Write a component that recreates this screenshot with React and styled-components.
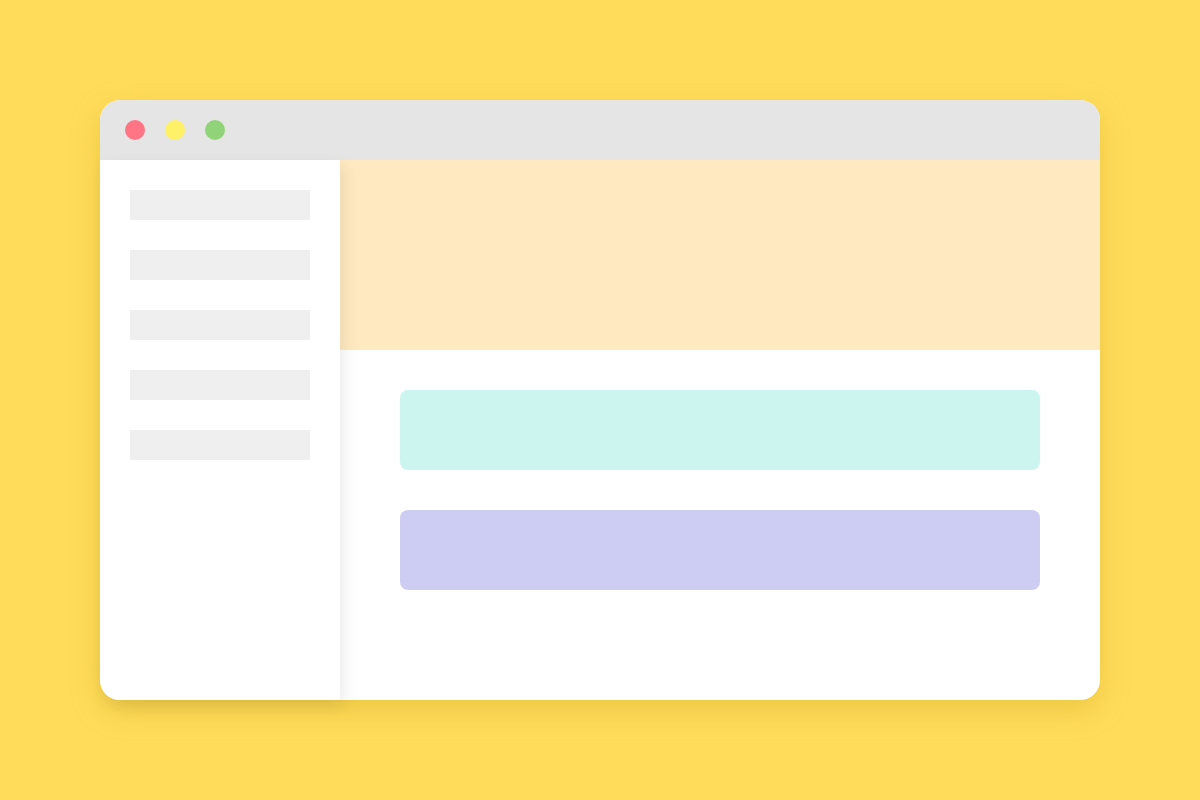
import React from "react";
import styled, { createGlobalStyle } from "styled-components";

const Global = createGlobalStyle`
  html, body {
    margin: 0;
    padding: 0;
    background: #ffdd5a;
    font-family: "Liberation Sans", Arial, sans-serif;
  }
`;

const Page = styled.div`
  width: 1200px;
  height: 800px;
  padding: 100px;
  box-sizing: border-box;
`;

const Window = styled.div`
  width: 1000px;
  height: 600px;
  background: #fff;
  border-radius: 20px;
  box-shadow: 0 10px 30px rgba(180, 130, 0, 0.25);
  display: flex;
  flex-direction: column;
`;

const TitleBar = styled.div`
  height: 60px;
  flex-shrink: 0;
  background: #e5e5e5;
  border-radius: 20px 20px 0 0;
  display: flex;
  align-items: center;
  gap: 20px;
  padding-left: 25px;
`;

const Dot = styled.span`
  width: 20px;
  height: 20px;
  border-radius: 50%;
  background: ${(p) => p.color};
`;

const Body = styled.div`
  flex: 1;
  display: flex;
`;

const Sidebar = styled.aside`
  width: 240px;
  flex-shrink: 0;
  background: #fff;
  border-radius: 0 0 0 20px;
  box-shadow: 4px 6px 16px rgba(0, 0, 0, 0.08);
  position: relative;
  z-index: 1;
  padding: 30px;
  box-sizing: border-box;
  display: flex;
  flex-direction: column;
  gap: 30px;
`;

const NavBar = styled.div`
  height: 30px;
  background: #efefef;
`;

const Main = styled.main`
  flex: 1;
  display: flex;
  flex-direction: column;
`;

const Header = styled.div`
  height: 190px;
  background: #fee9c0;
`;

const Content = styled.div`
  padding: 40px 60px;
  display: flex;
  flex-direction: column;
  gap: 40px;
`;

const Card = styled.div`
  height: 80px;
  border-radius: 8px;
  background: ${(p) => p.color};
`;

export default function App() {
  return (
    <Page>
      <Global />
      <Window>
        <TitleBar>
          <Dot color="#ff7585" />
          <Dot color="#fef067" />
          <Dot color="#90d378" />
        </TitleBar>
        <Body>
          <Sidebar>
            {[0, 1, 2, 3, 4].map((i) => (
              <NavBar key={i} />
            ))}
          </Sidebar>
          <Main>
            <Header />
            <Content>
              <Card color="#ccf5f0" />
              <Card color="#cdcdf3" />
            </Content>
          </Main>
        </Body>
      </Window>
    </Page>
  );
}
